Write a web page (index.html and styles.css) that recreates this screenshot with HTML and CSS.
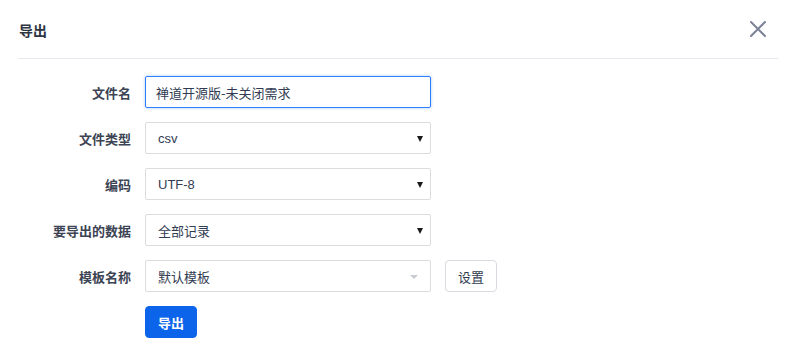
FILE: index.html
```html
<!DOCTYPE html>
<html>
<head>
    <title>导出</title>
    <link rel="stylesheet" href="styles.css">
</head>
<body>
    <div class="modal">
        <div class="modal-header">
            <span class="modal-title">导出</span>
            <button class="close-btn" aria-label="关闭">
                <svg width="16" height="16" viewBox="0 0 16 16">
                    <path d="M1 1 L15 15 M15 1 L1 15" stroke="#7d8396" stroke-width="2" stroke-linecap="round" fill="none"/>
                </svg>
            </button>
        </div>
        <form class="export-form">
            <div class="form-row">
                <label class="form-label">文件名</label>
                <input class="form-control focused" type="text" value="禅道开源版-未关闭需求">
            </div>
            <div class="form-row">
                <label class="form-label">文件类型</label>
                <div class="select-box">
                    <span class="select-text latin">csv</span>
                    <span class="select-arrow"></span>
                </div>
            </div>
            <div class="form-row">
                <label class="form-label">编码</label>
                <div class="select-box">
                    <span class="select-text latin">UTF-8</span>
                    <span class="select-arrow"></span>
                </div>
            </div>
            <div class="form-row">
                <label class="form-label">要导出的数据</label>
                <div class="select-box">
                    <span class="select-text">全部记录</span>
                    <span class="select-arrow"></span>
                </div>
            </div>
            <div class="form-row">
                <label class="form-label">模板名称</label>
                <div class="select-box">
                    <span class="select-text">默认模板</span>
                    <span class="chosen-arrow"></span>
                </div>
                <button type="button" class="btn">设置</button>
            </div>
            <div class="form-row">
                <span class="form-label"></span>
                <button type="button" class="btn btn-primary">导出</button>
            </div>
        </form>
    </div>
</body>
</html>
```

FILE: styles.css
```css
body {
    margin: 0;
    padding: 0;
    background-color: #ffffff;
    font-family: "Noto Sans CJK SC", "Liberation Sans", sans-serif;
    font-size: 13px;
    color: #313c52;
}

.modal {
    width: 795px;
    height: 362px;
}

.modal-header {
    display: flex;
    justify-content: space-between;
    align-items: center;
    margin: 0 17px 0 18px;
    height: 58px;
    border-bottom: 1px solid #e8e9ee;
}

.modal-title {
    font-size: 14px;
    font-weight: 700;
    color: #2e3542;
    padding-left: 1px;
    padding-top: 1px;
}

.close-btn {
    background: none;
    border: none;
    padding: 0;
    margin-right: 12px;
    width: 16px;
    height: 16px;
    cursor: pointer;
}

.close-btn svg {
    display: block;
}

.export-form {
    display: flex;
    flex-direction: column;
    gap: 14px;
    padding-top: 17px;
}

.form-row {
    display: flex;
    align-items: center;
    gap: 14px;
    height: 32px;
}

.form-label {
    width: 131px;
    text-align: right;
    font-weight: 700;
    color: #3c4353;
    flex-shrink: 0;
}

.form-control,
.select-box {
    box-sizing: border-box;
    width: 286px;
    height: 32px;
    border: 1px solid #dcdcdc;
    border-radius: 2px;
    background: #fff;
    font-family: "Noto Sans CJK SC", "Liberation Sans", sans-serif;
    font-size: 13px;
    color: #313c52;
}

.form-control {
    padding: 0 10px;
    outline: none;
}

.form-control.focused {
    border-color: #2e7fff;
    box-shadow: 0 0 3px rgba(46, 127, 255, 0.45);
}

.select-box {
    position: relative;
    display: flex;
    align-items: center;
    padding: 0 12px;
}

.select-text.latin {
    font-family: "Liberation Sans", sans-serif;
    font-size: 13px;
}

.select-arrow {
    position: absolute;
    right: 7px;
    top: 13px;
    width: 0;
    height: 0;
    border-left: 3px solid transparent;
    border-right: 3px solid transparent;
    border-top: 6px solid #1a1a1a;
}

.chosen-arrow {
    position: absolute;
    right: 12px;
    top: 14px;
    width: 0;
    height: 0;
    border-left: 4px solid transparent;
    border-right: 4px solid transparent;
    border-top: 4px solid #c8cbd2;
}

.btn {
    box-sizing: border-box;
    height: 32px;
    width: 52px;
    border: 1px solid #d8dbe0;
    border-radius: 4px;
    background: #fff;
    font-family: "Noto Sans CJK SC", sans-serif;
    font-size: 13px;
    color: #313c52;
    cursor: pointer;
    padding: 0;
}

.btn-primary {
    background-color: #0c64eb;
    border-color: #0c64eb;
    color: #fff;
    font-weight: 700;
}
```
